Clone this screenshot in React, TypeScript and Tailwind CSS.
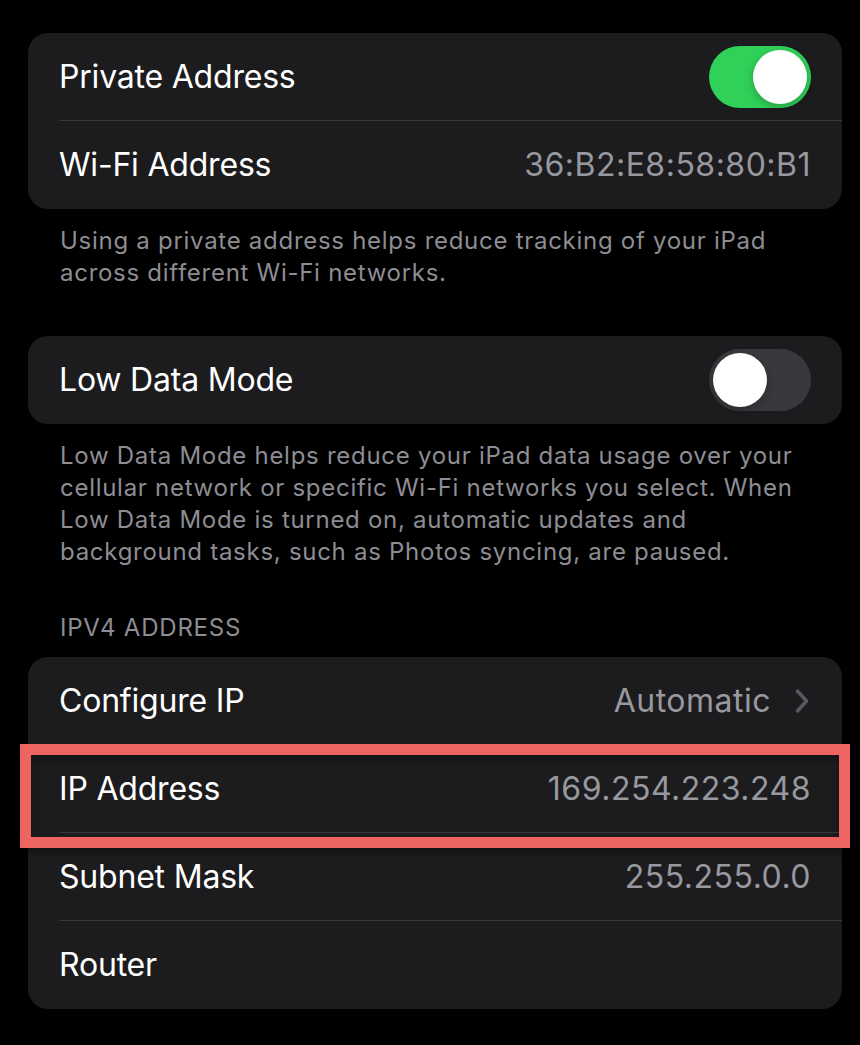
import React from "react";

const font = { fontFamily: "Inter, 'Noto Sans', sans-serif" };

function Toggle({ on }: { on: boolean }) {
  return (
    <div
      className={`relative w-[102px] h-[62px] rounded-full shrink-0 ${
        on ? "bg-[#30d158]" : "bg-[#39393d]"
      }`}
    >
      <div
        className={`absolute top-[4px] w-[54px] h-[54px] rounded-full bg-white shadow-[0_3px_8px_rgba(0,0,0,0.25)] ${
          on ? "left-[44px]" : "left-[4px]"
        }`}
      />
    </div>
  );
}

function Row({
  label,
  value,
  right,
  divider = true,
  chevron = false,
}: {
  label: string;
  value?: string;
  right?: React.ReactNode;
  divider?: boolean;
  chevron?: boolean;
}) {
  return (
    <div className="relative flex h-[88px] pl-[31px]">
      <div
        className={`flex flex-1 items-center justify-between pr-[31px] ${
          divider ? "border-b border-[#38383a]" : ""
        }`}
      >
        <span className="text-[32px] text-white tracking-[-0.2px] leading-none">{label}</span>
        {value !== undefined && (
          <div className="flex items-center gap-[24px]">
            <span className="text-[32px] text-[#98989f] tracking-[0.5px] leading-none">{value}</span>
            {chevron && (
              <svg width="14" height="24" viewBox="0 0 14 24" className="mr-[2px]">
                <path
                  d="M2.5 2 L11.5 12 L2.5 22"
                  fill="none"
                  stroke="#5a5a5e"
                  strokeWidth="3.4"
                  strokeLinecap="round"
                  strokeLinejoin="round"
                />
              </svg>
            )}
          </div>
        )}
        {right}
      </div>
    </div>
  );
}

export default function App() {
  return (
    <div className="w-[860px] h-[1045px] bg-black overflow-hidden pt-[33px]" style={font}>
      <div className="ml-[28px] mr-[18px] rounded-[20px] bg-[#1c1c1e] overflow-hidden">
        <Row label="Private Address" right={<Toggle on />} />
        <Row label="Wi-Fi Address" value="36:B2:E8:58:80:B1" divider={false} />
      </div>
      <p className="mt-[16px] pl-[60px] text-[24px] leading-[32px] text-[#8d8d93] tracking-[0.72px] whitespace-nowrap">
        Using a private address helps reduce tracking of your iPad
        <br />
        across different Wi-Fi networks.
      </p>

      <div className="mt-[47px] ml-[28px] mr-[18px] rounded-[20px] bg-[#1c1c1e] overflow-hidden">
        <Row label="Low Data Mode" right={<Toggle on={false} />} divider={false} />
      </div>
      <p className="mt-[16px] pl-[60px] text-[24px] leading-[32px] text-[#8d8d93] tracking-[0.72px] whitespace-nowrap">
        Low Data Mode helps reduce your iPad data usage over your
        <br />
        cellular network or specific Wi-Fi networks you select. When
        <br />
        Low Data Mode is turned on, automatic updates and
        <br />
        background tasks, such as Photos syncing, are paused.
      </p>

      <p className="mt-[44px] pl-[60px] text-[24px] leading-[32px] text-[#8d8d93] tracking-[0.8px]">
        IPV4 ADDRESS
      </p>

      <div className="relative mt-[13px] ml-[28px] mr-[18px] rounded-[20px] bg-[#1c1c1e]">
        <Row label="Configure IP" value="Automatic" chevron />
        <Row label="IP Address" value="169.254.223.248" />
        <Row label="Subnet Mask" value="255.255.0.0" />
        <Row label="Router" divider={false} />
        <div className="absolute left-[-8px] right-[-8px] top-[87px] h-[104px] border-[11px] border-[#ee6460] shadow-[0_4px_8px_rgba(0,0,0,0.35),inset_0_6px_8px_rgba(0,0,0,0.25)] pointer-events-none" />
      </div>
    </div>
  );
}
